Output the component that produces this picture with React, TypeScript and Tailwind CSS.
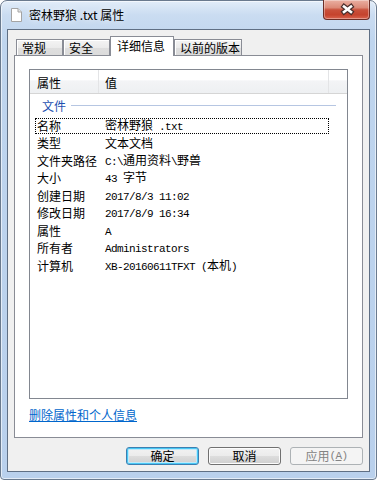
import React from "react";

const M = ({ children }: { children: React.ReactNode }) => (
  <span className="font-['Liberation_Mono',monospace] text-[11px] tracking-[-0.6px]">{children}</span>
);

const rows: [string, React.ReactNode][] = [
  ["名称", <>密林野狼<M>{" .txt"}</M></>],
  ["类型", <>文本文档</>],
  ["文件夹路径", <><M>{"C:\\"}</M>通用资料<M>{"\\"}</M>野兽</>],
  ["大小", <><M>{"43 "}</M>字节</>],
  ["创建日期", <M>2017/8/3 11:02</M>],
  ["修改日期", <M>2017/8/9 16:34</M>],
  ["属性", <M>A</M>],
  ["所有者", <M>Administrators</M>],
  ["计算机", <><M>{"XB-20160611TFXT ("}</M>本机<M>)</M></>],
];

function DocIcon() {
  return (
    <svg width="16" height="16" viewBox="0 0 16 16" className="ml-[7px] mt-[6px] shrink-0">
      <path d="M3.5 1.5 H10 L13.5 5 V14.5 H3.5 Z" fill="#ffffff" stroke="#a4a4a4" strokeWidth="1" />
      <path d="M10 1.5 V5 H13.5" fill="#e6e6e6" stroke="#a4a4a4" strokeWidth="1" />
    </svg>
  );
}

function CloseBtn() {
  return (
    <div className="w-[47px] h-[20px] -mt-[1px] mr-[6px] shrink-0 rounded-b-[4px] border border-t-0 border-[#6b2e27] bg-[linear-gradient(180deg,#eab0a2_0%,#dc8a78_40%,#c9503b_52%,#c5432d_78%,#d9644f_100%)] shadow-[inset_0_0_0_1px_rgba(255,255,255,0.35)]">
      <svg width="45" height="19" viewBox="0 0 45 19">
        <path d="M20 6.5 L27 12 M27 6.5 L20 12" stroke="#4b2f2c" strokeWidth="5" strokeLinecap="square" />
        <path d="M20 6.5 L27 12 M27 6.5 L20 12" stroke="#ffffff" strokeWidth="2.6" strokeLinecap="square" />
      </svg>
    </div>
  );
}

function Tab({ label, w, selected }: { label: string; w: string; selected?: boolean }) {
  if (selected) {
    return (
      <div className={`${w} h-[20px] -mb-[1px] relative bg-white border border-b-0 border-[#898c95] pl-[6px] pb-[2px] flex items-center leading-[14px]`}>
        {label}
      </div>
    );
  }
  return (
    <div className={`${w} h-[16px] border border-b-0 border-[#898c95] bg-[linear-gradient(180deg,#f4f4f4_0%,#ebebeb_50%,#dedede_51%,#dcdcdc_100%)] shadow-[inset_1px_1px_0_#ffffff] pl-[5px] flex items-center leading-[14px]`}>
      {label}
    </div>
  );
}

export default function App() {
  return (
    <div className="w-[377px] h-[480px] bg-white font-['Noto_Sans_CJK_SC',sans-serif] text-[12px] text-black">
      <div className="w-full h-full flex flex-col rounded-t-[7px] rounded-b-[4px] border border-[#6a7a8e] bg-[linear-gradient(180deg,#e2edf9_0px,#cadcf1_14px,#bfd5ee_40px,#b9d0ec_100%)] shadow-[inset_0_0_0_1px_rgba(255,255,255,0.6)]">
        <div className="h-[28px] flex items-start shrink-0">
          <DocIcon />
          <div className="ml-[5px] mt-[6px] leading-[16px] [text-shadow:0_0_6px_rgba(255,255,255,0.95)]">密林野狼 .txt 属性</div>
          <div className="flex-1" />
          <CloseBtn />
        </div>
        <div className="mx-[6px] h-[443px] shrink-0 border border-[#5f6f84] bg-[#f0f0f0] flex flex-col">
          <div className="h-[25px] flex items-end pl-[8px] relative z-10 shrink-0">
            <Tab label="常规" w="w-[47px]" />
            <Tab label="安全" w="w-[47px]" />
            <Tab label="详细信息" w="w-[64px]" selected />
            <Tab label="以前的版本" w="w-[68px]" />
          </div>
          <div className="mx-[6px] h-[383px] shrink-0 border border-[#898c95] bg-white flex flex-col">
            <div className="mx-[14px] mt-[13px] h-[330px] shrink-0 border border-[#828790] bg-white flex flex-col">
              <div className="h-[24px] shrink-0 flex border-b border-[#d5d5d5] bg-[linear-gradient(180deg,#ffffff_0%,#ffffff_45%,#f3f4f6_46%,#eef0f2_100%)]">
                <div className="w-[69px] border-r border-[#e3e4e6] pl-[7px] pt-[2px] flex items-center leading-[14px]">属性</div>
                <div className="w-[230px] border-r border-[#e3e4e6] pl-[6px] pt-[2px] flex items-center leading-[14px]">值</div>
                <div className="flex-1" />
              </div>
              <div className="h-[23px] shrink-0 flex items-center pl-[12px]">
                <span className="text-[#1e50b0] leading-[14px]">文件</span>
                <div className="flex-1 ml-[5px] mr-[11px] h-px bg-[#b6c6e2]" />
              </div>
              {rows.map(([label, value], i) => (
                <div key={label} className="h-[17.5px] shrink-0 pl-[5px] flex items-center">
                  <div
                    className={`w-[294px] h-[16px] flex items-center border ${i === 0 ? "border-dotted border-black" : "border-transparent"}`}
                  >
                    <span className="w-[63px] pl-[1px] leading-[14px] whitespace-nowrap">{label}</span>
                    <span className="pl-[6px] leading-[14px] whitespace-nowrap">{value}</span>
                  </div>
                </div>
              ))}
            </div>
            <div className="ml-[14px] mt-[10px] leading-[12px] text-[#0066cc] underline">删除属性和个人信息</div>
          </div>
          <div className="mt-[9px] pr-[6px] flex justify-end gap-[9px] shrink-0">
            <div className="w-[73px] h-[18px] rounded-[3px] border border-[#3c7fb1] bg-[linear-gradient(180deg,#f2f2f2_0%,#ebebeb_50%,#dddddd_51%,#cfcfcf_100%)] shadow-[inset_0_0_0_1px_#48c8f5,inset_0_0_0_2px_#bfe9fa] flex items-center justify-center leading-[14px]">
              确定
            </div>
            <div className="w-[73px] h-[18px] rounded-[3px] border border-[#707070] bg-[linear-gradient(180deg,#f2f2f2_0%,#ebebeb_50%,#dddddd_51%,#cfcfcf_100%)] shadow-[inset_0_0_0_1px_#fcfcfc] flex items-center justify-center leading-[14px]">
              取消
            </div>
            <div className="w-[73px] h-[18px] rounded-[3px] border border-[#adb2b5] bg-[#f4f4f4] text-[#838383] flex items-center justify-center leading-[14px]">
              应用<M>(<u>A</u>)</M>
            </div>
          </div>
        </div>
      </div>
    </div>
  );
}
